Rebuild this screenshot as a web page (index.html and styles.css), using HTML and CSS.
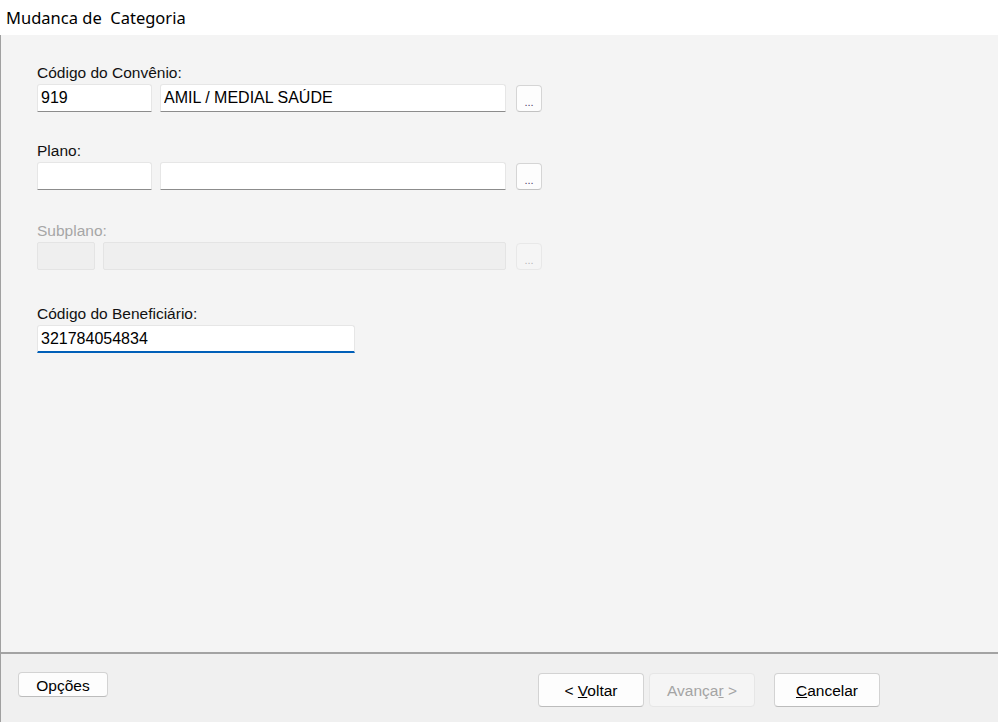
FILE: index.html
```html
<!DOCTYPE html>
<html lang="pt-BR">
<head>
    <meta charset="UTF-8">
    <meta name="viewport" content="width=device-width, initial-scale=1.0">
    <title>Mudanca de Categoria</title>
    <link rel="stylesheet" href="styles.css">
</head>
<body>
    <div class="titlebar">
        <span class="title">Mudanca de  Categoria</span>
    </div>

    <div class="window">
        <div class="form">
            <div class="field">
                <label class="field-label">Código do Convênio:</label>
                <div class="field-row">
                    <input class="input input-code" type="text" value="919">
                    <input class="input input-name" type="text" value="AMIL / MEDIAL SAÚDE">
                    <button class="lookup">...</button>
                </div>
            </div>

            <div class="field">
                <label class="field-label">Plano:</label>
                <div class="field-row">
                    <input class="input input-code" type="text" value="">
                    <input class="input input-name" type="text" value="">
                    <button class="lookup">...</button>
                </div>
            </div>

            <div class="field field-disabled">
                <label class="field-label">Subplano:</label>
                <div class="field-row">
                    <input class="input input-code-small" type="text" value="" disabled>
                    <input class="input input-name-wide" type="text" value="" disabled>
                    <button class="lookup" disabled>...</button>
                </div>
            </div>

            <div class="field field-beneficiario">
                <label class="field-label">Código do Beneficiário:</label>
                <div class="field-row">
                    <input class="input input-long input-active" type="text" value="321784054834">
                </div>
            </div>
        </div>

        <div class="footer">
            <button class="btn btn-options">Opções</button>
            <div class="nav-buttons">
                <button class="btn btn-nav">&lt; <u>V</u>oltar</button>
                <button class="btn btn-nav" disabled>Avança<u>r</u> &gt;</button>
                <button class="btn btn-nav btn-cancel"><u>C</u>ancelar</button>
            </div>
        </div>
    </div>
</body>
</html>
```

FILE: styles.css
```css
* {
    box-sizing: border-box;
}

body {
    margin: 0;
    width: 998px;
    height: 722px;
    overflow: hidden;
    background-color: #ffffff;
    font-family: 'Liberation Sans', Arial, sans-serif;
    color: #000000;
}

/* window caption */
.titlebar {
    height: 35px;
    padding-left: 6px;
    display: flex;
    align-items: center;
    background-color: #ffffff;
}

.title {
    font-family: 'Noto Sans', sans-serif;
    font-size: 16.5px;
    white-space: pre;
    color: #000000;
}

.window {
    height: 687px;
    display: flex;
    flex-direction: column;
    border-left: 1px solid #a0a0a0;
}

/* form area */
.form {
    flex: 1;
    background-color: #f4f4f4;
    padding: 29px 0 0 36px;
    display: flex;
    flex-direction: column;
    gap: 30px;
}

.field-label {
    display: block;
    font-size: 15.5px;
    line-height: 18px;
    margin-bottom: 2px;
    color: #111111;
}

.field-disabled {
    margin-top: 2px;
}

.field-disabled .field-label {
    color: #a6a6a6;
}

.field-beneficiario {
    margin-top: 5px;
}

.field-row {
    display: flex;
    align-items: center;
}

.input {
    height: 28px;
    padding: 0 3px;
    font-family: 'Liberation Sans', Arial, sans-serif;
    font-size: 16px;
    color: #000000;
    background-color: #ffffff;
    border: 1px solid #e6e6e6;
    border-bottom-color: #8c8c8c;
    border-radius: 3px 3px 0 0;
    outline: none;
}

.input:disabled {
    background-color: #efefef;
    border-color: #e4e4e4;
    border-radius: 2px;
}

.input-code {
    width: 115px;
    margin-right: 8px;
}

.input-name {
    width: 346px;
    margin-right: 10px;
}

.input-code-small {
    width: 58px;
    margin-right: 8px;
}

.input-name-wide {
    width: 403px;
    margin-right: 10px;
}

.input-long {
    width: 318px;
}

.input-active {
    border-bottom: 2px solid #005fb8;
}

/* small "..." search button */
.lookup {
    width: 26px;
    height: 27px;
    padding: 8px 0 0;
    font-family: 'Liberation Sans', Arial, sans-serif;
    font-size: 11px;
    color: #4b3f6b;
    background-color: #fdfdfd;
    border: 1px solid #d5d5d5;
    border-bottom-color: #c2c2c2;
    border-radius: 4px;
}

.lookup:disabled {
    color: #b8b8b8;
    background-color: #f5f5f5;
    border-color: #e8e8e8;
}

/* bottom button bar */
.footer {
    height: 70px;
    background-color: #f0f0f0;
    border-top: 2px solid #a3a3a3;
    padding: 18px 118px 0 17px;
    display: flex;
    justify-content: space-between;
    align-items: flex-start;
}

.btn {
    padding: 0;
    font-family: 'Liberation Sans', Arial, sans-serif;
    font-size: 15.5px;
    color: #000000;
    background-color: #fdfdfd;
    border: 1px solid #d3d3d3;
    border-bottom-color: #bcbcbc;
    border-radius: 4px;
}

.btn:disabled {
    color: #a4a4a4;
    background-color: #f5f5f5;
    border-color: #e6e6e6;
}

.btn-options {
    width: 90px;
    height: 25px;
    padding-top: 2px;
}

.nav-buttons {
    display: flex;
    gap: 5px;
    margin-top: 1px;
}

.btn-nav {
    width: 106px;
    height: 34px;
    padding-top: 2px;
}

.btn-cancel {
    margin-left: 14px;
}
```
